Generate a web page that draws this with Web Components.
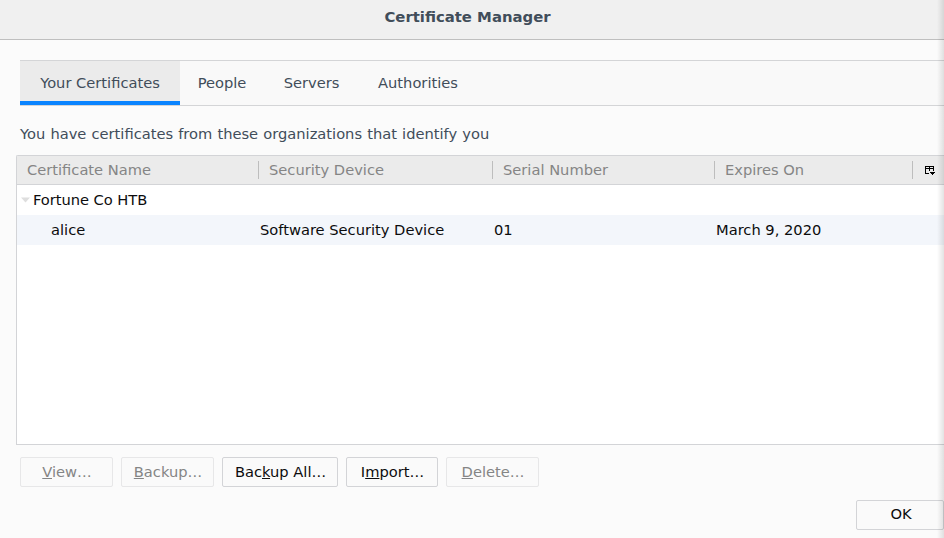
<!DOCTYPE html>
<html lang="en">
<head>
<meta charset="utf-8">
<title>Certificate Manager</title>
<style>
html,body{margin:0;height:100%;overflow:hidden}
body{font:14.667px/20px "DejaVu Sans",sans-serif;background:#fbfbfb;color:#414d5a}
</style>
</head>
<body>
<cert-dialog>
  <span slot="title">Certificate Manager</span>
  <tab-strip slot="tabs">
    <tab-item selected style="--w:160px">Your Certificates</tab-item>
    <tab-item style="--w:84px">People</tab-item>
    <tab-item style="--w:95px">Servers</tab-item>
    <tab-item style="--w:118px">Authorities</tab-item>
  </tab-strip>
  <span slot="description">You have certificates from these organizations that identify you</span>
  <cert-tree></cert-tree>
  <dialog-button slot="actions" disabled style="--w:93px;--pad:1px"><u>V</u>iew…</dialog-button>
  <dialog-button slot="actions" disabled style="--w:93px;--pad:1px"><u>B</u>ackup…</dialog-button>
  <dialog-button slot="actions" style="--w:116px;--pad:1px">Bac<u>k</u>up All…</dialog-button>
  <dialog-button slot="actions" style="--w:92px;--pad:1px">I<u>m</u>port…</dialog-button>
  <dialog-button slot="actions" disabled style="--w:93px;--pad:1px"><u>D</u>elete…</dialog-button>
  <dialog-button slot="accept" style="--w:88px;--pad:2px;--lift:2px">OK</dialog-button>
</cert-dialog>
<script>
function define(name, html) {
  const template = document.createElement('template');
  template.innerHTML = html;
  customElements.define(name, class extends HTMLElement {
    constructor() {
      super();
      this.attachShadow({mode: 'open'}).append(template.content.cloneNode(true));
    }
  });
}

define('tab-item', `
<style>
:host{display:flex;box-sizing:border-box;width:var(--w);height:44px;justify-content:center;align-items:center;border-bottom:4px solid transparent;padding-top:4px;white-space:nowrap}
:host([selected]){background:#ebebeb;border-bottom-color:#0a84ff}
</style><span><slot></slot></span>`);

define('tab-strip', `
<style>
:host{display:flex;height:44px;margin-left:20px;border-top:1px solid #d4d5d7;border-bottom:1px solid #d4d5d7;background:#f9f9f9}
</style><slot></slot>`);

define('dialog-button', `
<style>
:host{display:flex;box-sizing:border-box;width:var(--w);height:30px;justify-content:center;align-items:center;border:1px solid #d3d4d7;border-radius:2px;background:#fafafa;color:#0c0c0d;white-space:nowrap;padding-left:var(--pad,0);padding-bottom:var(--lift,0)}
:host([disabled]){border-color:#e7e7e8;color:#858585}
::slotted(u){text-decoration-thickness:1px;text-underline-offset:1px;text-decoration-skip-ink:none}
</style><span><slot></slot></span>`);

define('column-head', `
<style>
:host{display:flex;align-items:center;box-sizing:border-box;height:28px}
:host([first]){padding-left:10px}
i{width:1px;height:18px;background:#bdbdbd;margin-right:10px}
:host([first]) i{display:none}
</style><i></i><slot></slot>`);

define('cert-tree', `
<style>
:host{display:block;box-sizing:border-box;height:290px;margin-left:16px;border:1px solid #d3d4d7;border-right:0;border-radius:2px 0 0 0;background:#fff;color:#0c0c0d}
.grid{display:grid;grid-template-columns:241px 234px 222px 198px 32px}
.head{height:28px;background:#ebebeb;border-bottom:1px solid #d3d4d7;color:#858585}
.row{height:30px;align-items:center}
.row span{padding-left:2px}
.row .child{padding-left:34px}
.alt{background:#f3f6fb}
.group{display:flex}
.group svg{margin:0 3px 0 4px}
.group span{padding:0;letter-spacing:-.04px}
.picker svg{margin-left:2px}
</style>
<div class="grid head">
  <column-head first>Certificate Name</column-head>
  <column-head>Security Device</column-head>
  <column-head>Serial Number</column-head>
  <column-head>Expires On</column-head>
  <column-head class="picker"><svg width="10" height="9" viewBox="0 0 10 9" shape-rendering="crispEdges"><path d="M0 0h9v1H0zM0 2h9v1H0zM0 0h1v8H0zM4 0h1v5H4zM8 0h1v5H8zM0 7h4v1H0zM5 6h5v1H5zM6 7h3v1H6zM7 8h1v1H7z" fill="#000"/></svg></column-head>
</div>
<div class="row group"><svg width="9" height="6" viewBox="0 0 9 6"><path d="M0 0.5h9L4.5 5.5z" fill="#dedede"/></svg><span>Fortune Co HTB</span></div>
<div class="grid row alt"><span class="child">alice</span><span>Software Security Device</span><span>01</span><span>March 9, 2020</span></div>`);

define('cert-dialog', `
<style>
:host{display:flex;flex-direction:column;position:relative;height:538px;overflow:hidden;box-sizing:border-box}
header{box-sizing:border-box;height:40px;padding:7px 9px 0 0;border-bottom:1px solid #bfbfbf;background:#f0f0f0;text-align:center;font-weight:bold;font-size:14.86px}
.tabs{padding-top:20px}
.desc{height:31px;padding:18px 0 0 20px;word-spacing:.47px}
.actions{display:flex;gap:8px;padding:12px 0 0 20px}
.accept{display:flex;justify-content:flex-end;padding-top:13px}
.shade{position:absolute;top:0;right:0;bottom:0;width:7px;background:linear-gradient(90deg,transparent,rgba(0,0,0,.11));pointer-events:none}
</style>
<header><slot name="title"></slot></header>
<div class="tabs"><slot name="tabs"></slot></div>
<div class="desc"><slot name="description"></slot></div>
<slot></slot>
<div class="actions"><slot name="actions"></slot></div>
<div class="accept"><slot name="accept"></slot></div>
<div class="shade"></div>`);
</script>
</body>
</html>
